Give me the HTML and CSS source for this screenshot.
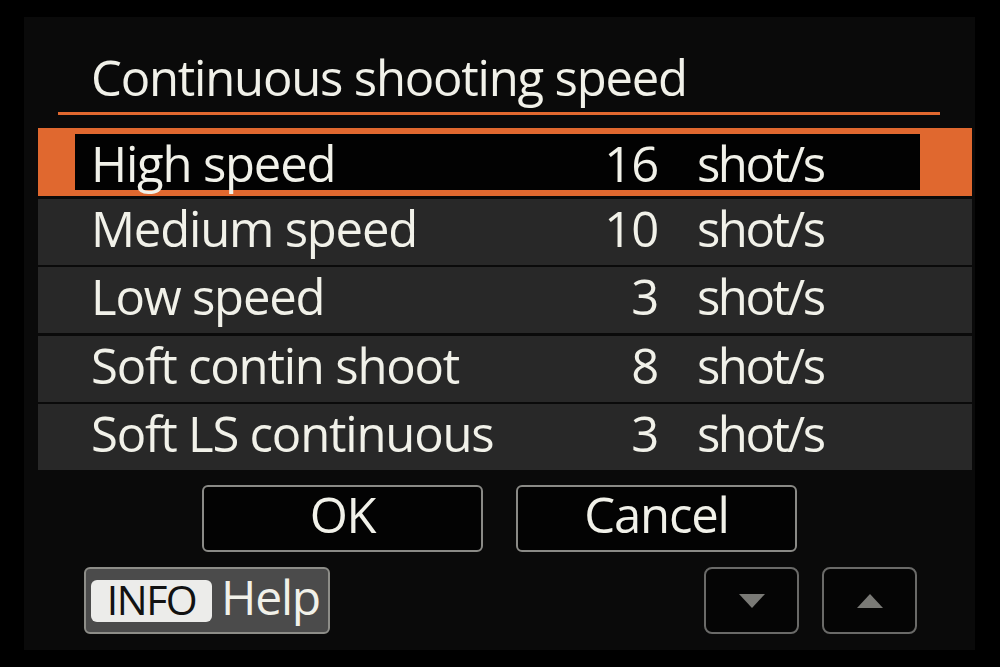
FILE: index.html
```html
<!DOCTYPE html>
<html lang="en">
<head>
    <meta charset="UTF-8">
    <meta name="viewport" content="width=device-width, initial-scale=1.0">
    <title>Continuous shooting speed</title>
    <link rel="stylesheet" href="styles.css">
</head>
<body>
    <div class="screen">
        <h1 class="title">Continuous shooting speed</h1>
        <div class="title-rule"></div>

        <div class="speed-list">
            <div class="speed-row selected">
                <div class="speed-inner">
                    <span class="speed-label">High speed</span>
                    <span class="speed-value">16</span>
                    <span class="speed-unit">shot/s</span>
                </div>
            </div>
            <div class="speed-row">
                <div class="speed-inner">
                    <span class="speed-label">Medium speed</span>
                    <span class="speed-value">10</span>
                    <span class="speed-unit">shot/s</span>
                </div>
            </div>
            <div class="speed-row">
                <div class="speed-inner">
                    <span class="speed-label">Low speed</span>
                    <span class="speed-value">3</span>
                    <span class="speed-unit">shot/s</span>
                </div>
            </div>
            <div class="speed-row">
                <div class="speed-inner">
                    <span class="speed-label">Soft contin shoot</span>
                    <span class="speed-value">8</span>
                    <span class="speed-unit">shot/s</span>
                </div>
            </div>
            <div class="speed-row">
                <div class="speed-inner">
                    <span class="speed-label">Soft LS continuous</span>
                    <span class="speed-value">3</span>
                    <span class="speed-unit">shot/s</span>
                </div>
            </div>
        </div>

        <div class="actions">
            <button class="action-button">OK</button>
            <button class="action-button">Cancel</button>
        </div>

        <div class="footer">
            <div class="help-button">
                <span class="info-key">INFO</span>
                <span class="help-text">Help</span>
            </div>
            <div class="scroll-buttons">
                <button class="scroll-button">
                    <svg width="26" height="14" viewBox="0 0 26 14"><polygon points="0,0 26,0 13,14" fill="currentColor"></polygon></svg>
                </button>
                <button class="scroll-button">
                    <svg width="26" height="14" viewBox="0 0 26 14"><polygon points="0,14 26,14 13,0" fill="currentColor"></polygon></svg>
                </button>
            </div>
        </div>
    </div>
</body>
</html>
```

FILE: styles.css
```css
:root {
    --orange: #e0682f;
    --row: #282828;
    --panel: #0a0a0a;
    --text: #f1f1e9;
    --outline: #8a8a86;
}

* {
    box-sizing: border-box;
    margin: 0;
    padding: 0;
}

body {
    background: #000;
    font-family: 'Open Sans', 'DejaVu Sans', sans-serif;
    font-weight: 450;
    color: var(--text);
    width: 1000px;
    height: 667px;
    overflow: hidden;
}

.screen {
    margin: 17px 25px 0 24px;
    height: 633px;
    background: var(--panel);
    padding-top: 32px;
}

.title {
    font-size: 49px;
    font-weight: 450;
    line-height: 56px;
    padding-left: 67px;
    letter-spacing: -1.2px;
}

.title-rule {
    margin: 7px 0 0 34px;
    width: 882px;
    height: 3px;
    background: var(--orange);
}

.speed-list {
    margin: 13px 0 0 14px;
    width: 934px;
    display: flex;
    flex-direction: column;
    gap: 2.5px;
}

.speed-row {
    height: 66px;
    background: var(--row);
}

.speed-row.selected {
    height: 68px;
    background: var(--orange);
    padding: 6px 52px 6px 37px;
}

.speed-inner {
    height: 100%;
    display: grid;
    grid-template-columns: 1fr auto 275px;
    column-gap: 39px;
    align-items: center;
    padding-left: 53px;
    padding-bottom: 9px;
    font-size: 49px;
    line-height: 58px;
    letter-spacing: -1.2px;
}

.selected .speed-inner {
    background: #020202;
    padding-left: 16px;
    grid-template-columns: 1fr auto 223px;
}

.speed-value {
    text-align: right;
}

.speed-unit {
    letter-spacing: -2.5px;
}

.actions {
    margin-top: 15px;
    display: flex;
    justify-content: center;
    gap: 33px;
}

.action-button {
    width: 281px;
    height: 67px;
    background: #030303;
    border: 2px solid var(--outline);
    border-radius: 6px;
    color: var(--text);
    font-family: inherit;
    font-weight: inherit;
    font-size: 49px;
    letter-spacing: -1.2px;
    line-height: 1;
    padding-bottom: 8px;
}

.footer {
    margin-top: 15px;
    padding: 0 58px 0 60px;
    display: flex;
    justify-content: space-between;
}

.help-button {
    width: 246px;
    height: 67px;
    background: #4b4b4b;
    border: 2px solid #8d8d88;
    border-radius: 6px;
    display: flex;
    align-items: center;
    padding-left: 5px;
    gap: 9px;
}

.info-key {
    width: 121px;
    height: 42px;
    background: #ececea;
    border-radius: 6px;
    color: #121212;
    font-size: 41px;
    font-weight: 420;
    letter-spacing: -1.5px;
    line-height: 38px;
    padding-bottom: 4px;
    text-align: center;
}

.help-text {
    font-size: 48px;
    line-height: 1;
    letter-spacing: -1.2px;
    padding-bottom: 8px;
}

.scroll-buttons {
    display: flex;
    gap: 23px;
}

.scroll-button {
    width: 95px;
    height: 67px;
    background: #050505;
    border: 2px solid #6a6a68;
    border-radius: 8px;
    color: #7a7a76;
    display: flex;
    align-items: center;
    justify-content: center;
}
```
